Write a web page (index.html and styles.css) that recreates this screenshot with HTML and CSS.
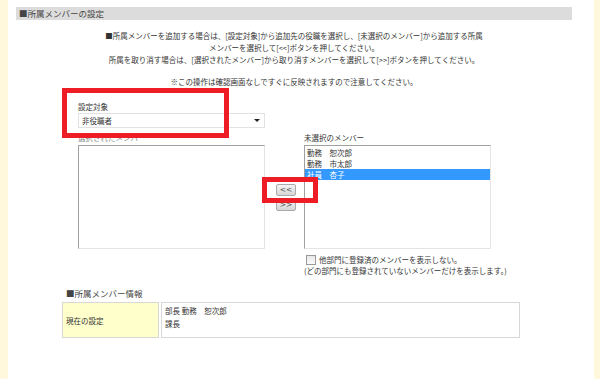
FILE: index.html
```html
<!DOCTYPE html>
<html lang="ja">
<head>
  <meta charset="UTF-8" />
  <title>所属メンバーの設定</title>
  <link rel="stylesheet" href="styles.css">
</head>
<body>
  <div class="page">
    <div class="strip"></div>

    <div class="main">
      <!-- 所属メンバーの設定 -->
      <div class="section-head">■所属メンバーの設定</div>

      <div class="notes">
        <div>■所属メンバーを追加する場合は、[設定対象]から追加先の役職を選択し、[未選択のメンバー]から追加する所属</div>
        <div>メンバーを選択して[&lt;&lt;]ボタンを押してください。</div>
        <div>所属を取り消す場合は、[選択されたメンバー]から取り消すメンバーを選択して[&gt;&gt;]ボタンを押してください。</div>
        <div class="caution">※この操作は確認画面なしですぐに反映されますので注意してください。</div>
      </div>

      <div class="member-grid">
        <div class="target">
          <div class="label">設定対象</div>
          <div class="select">
            <span>非役職者</span>
            <span class="arrow"></span>
          </div>
        </div>

        <div class="label left-label">選択されたメンバー</div>
        <div class="label right-label">未選択のメンバー</div>

        <div class="listbox"></div>
        <div class="move-buttons">
          <button class="move-btn">&lt;&lt;</button>
          <button class="move-btn">&gt;&gt;</button>
        </div>
        <div class="listbox">
          <div class="option">勤務　恕次郎</div>
          <div class="option">勤務　市太郎</div>
          <div class="option selected">社員　杏子</div>
        </div>

        <div class="filter">
          <label class="check-line"><span class="checkbox"></span>他部門に登録済のメンバーを表示しない。</label>
          <div>(どの部門にも登録されていないメンバーだけを表示します。)</div>
        </div>
      </div>

      <!-- 所属メンバー情報 -->
      <div class="sub-head">■所属メンバー情報</div>
      <div class="info-table">
        <div class="info-key">現在の設定</div>
        <div class="info-value">
          <div>部長 勤務　恕次郎</div>
          <div>課長</div>
        </div>
      </div>

      <!-- 注目枠 -->
      <div class="mark mark-target"></div>
      <div class="mark mark-button"></div>
    </div>

    <div class="strip strip-right"></div>
  </div>
</body>
</html>
```

FILE: styles.css
```css
body {
  margin: 0;
  font-family: "Noto Sans CJK JP", "DejaVu Sans", sans-serif;
  font-size: 7.5px;
  color: #333;
  background: #fff;
}

.page {
  display: flex;
  height: 379px;
}

.strip {
  width: 8px;
  background-color: #fff8dc;
}

.strip-right {
  width: 6px;
}

.main {
  flex: 1;
  position: relative;
  padding: 7px 22px 0 8px;
  background: #fff;
}

.section-head {
  height: 13px;
  line-height: 13px;
  padding-left: 3px;
  background-color: #dcdcdc;
  font-size: 8.5px;
  color: #444;
}

.notes {
  margin-top: 10px;
  text-align: center;
  line-height: 12px;
}

.caution {
  margin-top: 10px;
}

.member-grid {
  display: grid;
  grid-template-columns: 187px 39px 187px;
  margin: 14px 0 0 62px;
}

.target {
  grid-column: 1;
}

.label {
  line-height: 10px;
}

.select {
  display: flex;
  justify-content: space-between;
  align-items: center;
  height: 13px;
  margin-top: 1px;
  padding: 0 4px 0 3px;
  border: 1px solid #e2e2e2;
  background: #fff;
}

.arrow {
  width: 0;
  height: 0;
  border-left: 3px solid transparent;
  border-right: 3px solid transparent;
  border-top: 3px solid #222;
}

.left-label,
.right-label {
  grid-row: 2;
  margin: 5px 0 2px;
}

.left-label {
  grid-column: 1;
  color: #888;
}

.right-label {
  grid-column: 3;
}

.listbox {
  grid-row: 3;
  height: 101px;
  padding-top: 1px;
  border: 1px solid;
  border-color: #a0a0a0 #e4e4e4 #e4e4e4 #a0a0a0;
  line-height: 11px;
}

.option {
  padding-left: 2px;
}

.selected {
  background-color: #3399ff;
  color: #fff;
}

.move-buttons {
  grid-row: 3;
  display: flex;
  flex-direction: column;
  justify-content: center;
  gap: 3px;
  padding-left: 11px;
}

.move-btn {
  width: 20px;
  height: 12px;
  padding: 0;
  border: 1px solid #aaa;
  border-radius: 2px;
  background: linear-gradient(#f4f4f4, #d6d6d6);
  font-family: "DejaVu Sans", sans-serif;
  font-size: 7.5px;
  line-height: 10px;
  color: #555;
}

.filter {
  grid-column: 3;
  grid-row: 4;
  margin-top: 5px;
  line-height: 11px;
  white-space: nowrap;
}

.check-line {
  display: flex;
  align-items: center;
  gap: 3px;
  padding-left: 2px;
}

.checkbox {
  width: 8px;
  height: 8px;
  border: 1px solid #999;
  background: linear-gradient(#e8e8e8, #fafafa);
}

.sub-head {
  margin: 11px 0 3px 50px;
  font-size: 8.5px;
  line-height: 12px;
  color: #444;
}

.info-table {
  display: grid;
  grid-template-columns: 97px 359px;
  gap: 2px;
  height: 36px;
  margin-left: 46px;
}

.info-key,
.info-value {
  border: 1px solid #d8d8d8;
}

.info-key {
  display: flex;
  align-items: center;
  padding-left: 3px;
  background-color: #ffffcc;
}

.info-value {
  padding: 1px 3px;
  line-height: 13px;
}

.mark {
  position: absolute;
  border: 5px solid #ee1c25;
}

.mark-target {
  left: 54px;
  top: 88px;
  width: 157px;
  height: 40px;
}

.mark-button {
  left: 254px;
  top: 177px;
  width: 46px;
  height: 16px;
}
```
